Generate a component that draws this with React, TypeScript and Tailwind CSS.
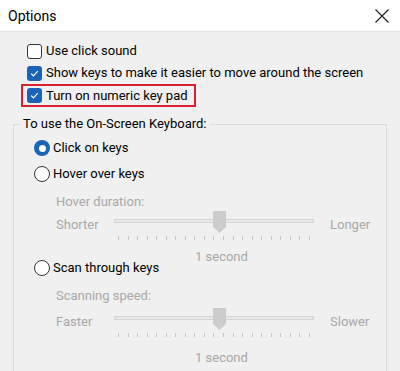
import React from "react";

const font = { fontFamily: 'Roboto, "Noto Sans", sans-serif' };

function CheckBox({ checked }: { checked?: boolean }) {
  if (checked) {
    return (
      <span className="flex h-[15px] w-[15px] shrink-0 items-center justify-center rounded-[3px] bg-[#1a64b8]">
        <svg width="11" height="11" viewBox="0 0 11 11">
          <path d="M2.2 5.6 L4.4 7.8 L8.8 3.2" fill="none" stroke="#fff" strokeWidth="1.2" />
        </svg>
      </span>
    );
  }
  return <span className="h-[15px] w-[15px] shrink-0 rounded-[3px] border border-[#333] bg-white" />;
}

function Radio({ checked }: { checked?: boolean }) {
  if (checked) {
    return (
      <span className="flex h-[16px] w-[16px] shrink-0 items-center justify-center rounded-full bg-[#1a64b8]">
        <span className="h-[7px] w-[7px] rounded-full bg-white" />
      </span>
    );
  }
  return <span className="h-[16px] w-[16px] shrink-0 rounded-full border border-[#333] bg-white" />;
}

function Slider({ left, right }: { left: string; right: string }) {
  const ticks = Array.from({ length: 21 });
  return (
    <div className="flex h-[30px] items-start text-[#a8a8a8]">
      <span className="w-[58px] pt-[4px]">{left}</span>
      <div className="relative h-[30px] w-[200px]">
        <div className="absolute left-0 right-0 top-[8px] h-[4px] border border-[#d4d4d4] bg-[#e7e7e7]" />
        <svg className="absolute left-[99px] top-0" width="13" height="22" viewBox="0 0 13 22">
          <path d="M0 0 H13 V16 L6.5 22 L0 16 Z" fill="#cccccc" />
        </svg>
        <div className="absolute left-[4px] right-[4px] top-[25px] flex justify-between">
          {ticks.map((_, i) => (
            <span key={i} className="h-[4px] w-px bg-[#c4c4c4]" />
          ))}
        </div>
      </div>
      <span className="pl-[16px] pt-[4px]">{right}</span>
    </div>
  );
}

export default function App() {
  return (
    <div className="h-[371px] w-[400px] overflow-hidden whitespace-nowrap bg-[#f0f0f0] text-[13px] leading-[20px] text-black" style={font}>
      <div className="flex h-[32px] items-center justify-between border-b border-[#e4e4e4] bg-white pl-[8px] pr-[10px]">
        <span className="text-[14px]">Options</span>
        <svg width="16" height="16" viewBox="0 0 16 16">
          <path d="M1.5 1.5 L14.5 14.5 M14.5 1.5 L1.5 14.5" stroke="#222" strokeWidth="1.2" />
        </svg>
      </div>

      <div className="pl-[21px] pt-[8px]">
        <div className="flex h-[22px] items-center gap-[4px] pl-[6px]">
          <CheckBox />
          <span>Use click sound</span>
        </div>
        <div className="flex h-[22px] items-center gap-[4px] pl-[6px]">
          <CheckBox checked />
          <span>Show keys to make it easier to move around the screen</span>
        </div>
        <div className="flex h-[23px] w-[175px] items-center gap-[4px] border-2 border-[#d8232f] pl-[4px]">
          <CheckBox checked />
          <span>Turn on numeric key pad</span>
        </div>
      </div>

      <fieldset className="mx-[13px] mt-[7px] h-[300px] border border-[#dadada]">
        <legend className="ml-[6px] px-[3px]">To use the On-Screen Keyboard:</legend>
        <div className="pl-[20px]">
          <div className="flex h-[26px] items-center gap-[3px] pt-[2px]">
            <Radio checked />
            <span>Click on keys</span>
          </div>
          <div className="flex h-[27px] items-center gap-[3px]">
            <Radio />
            <span>Hover over keys</span>
          </div>
          <div className="pl-[22px]">
            <div className="h-[24px] pt-[5px] text-[#a8a8a8]">Hover duration:</div>
            <Slider left="Shorter" right="Longer" />
            <div className="h-[26px] pt-[6px] text-[#a8a8a8]">
              <span className="ml-[139px]">1 second</span>
            </div>
          </div>
          <div className="-mt-[10px] flex h-[22px] items-center gap-[3px]">
            <Radio />
            <span>Scan through keys</span>
          </div>
          <div className="pl-[22px]">
            <div className="h-[29px] pt-[7px] text-[#a8a8a8]">Scanning speed:</div>
            <Slider left="Faster" right="Slower" />
            <div className="pt-[10px] text-[#a8a8a8]">
              <span className="ml-[139px]">1 second</span>
            </div>
          </div>
        </div>
      </fieldset>
    </div>
  );
}
